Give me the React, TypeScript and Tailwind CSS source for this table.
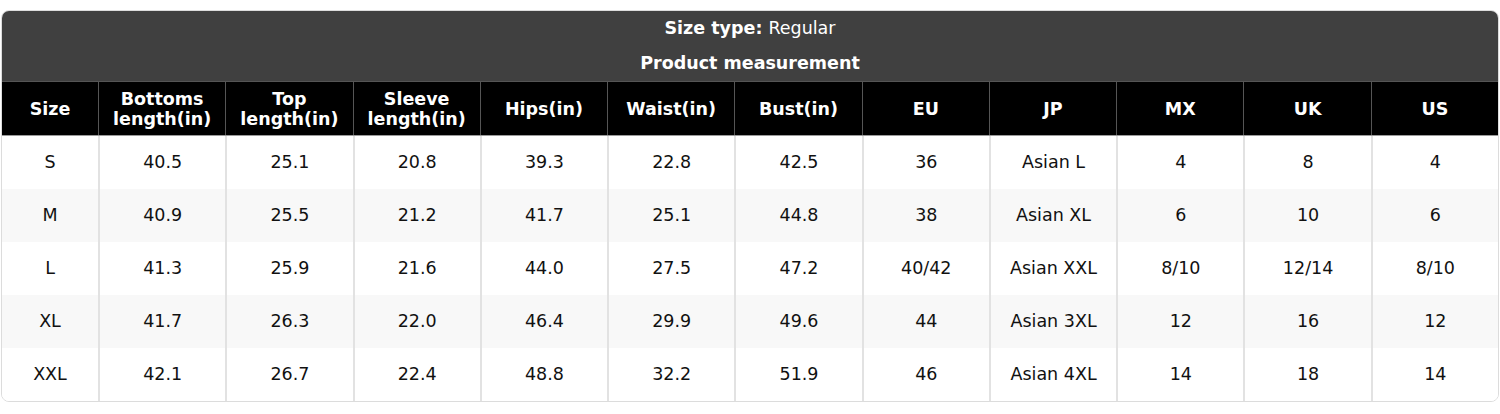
import React from "react";

const headers = [
  ["Size"],
  ["Bottoms", "length(in)"],
  ["Top", "length(in)"],
  ["Sleeve", "length(in)"],
  ["Hips(in)"],
  ["Waist(in)"],
  ["Bust(in)"],
  ["EU"],
  ["JP"],
  ["MX"],
  ["UK"],
  ["US"],
];

const rows = [
  ["S", "40.5", "25.1", "20.8", "39.3", "22.8", "42.5", "36", "Asian L", "4", "8", "4"],
  ["M", "40.9", "25.5", "21.2", "41.7", "25.1", "44.8", "38", "Asian XL", "6", "10", "6"],
  ["L", "41.3", "25.9", "21.6", "44.0", "27.5", "47.2", "40/42", "Asian XXL", "8/10", "12/14", "8/10"],
  ["XL", "41.7", "26.3", "22.0", "46.4", "29.9", "49.6", "44", "Asian 3XL", "12", "16", "12"],
  ["XXL", "42.1", "26.7", "22.4", "48.8", "32.2", "51.9", "46", "Asian 4XL", "14", "18", "14"],
];

export default function App() {
  return (
    <div
      className="w-[1500px] h-[414px] bg-white pt-[10px] px-[1px]"
      style={{ fontFamily: '"DejaVu Sans", Verdana, sans-serif' }}
    >
      <div className="rounded-[8px] border border-[#dcdcdc] overflow-hidden">
        <div className="bg-[#404040] text-white text-[17.5px] border-b border-[#555]">
          <div className="h-[35px] flex items-center justify-center">
            <span className="font-bold">Size type:</span>
            <span className="ml-[6px]">Regular</span>
          </div>
          <div className="h-[35px] flex items-center justify-center font-bold">
            Product measurement
          </div>
        </div>
        <div className="grid grid-cols-[96px_repeat(11,minmax(0,1fr))] bg-black text-white font-bold text-[17.5px] leading-[20px] border-b border-[#9a9a9a]">
          {headers.map((h, i) => (
            <div
              key={i}
              className={`h-[53px] flex flex-col items-center justify-center text-center ${
                i > 0 ? "border-l border-[#555]" : ""
              }`}
            >
              {h.map((l, j) => (
                <span key={j}>{l}</span>
              ))}
            </div>
          ))}
        </div>
        {rows.map((r, ri) => (
          <div
            key={ri}
            className={`grid grid-cols-[96px_repeat(11,minmax(0,1fr))] text-[17.5px] text-[#111] ${
              ri % 2 === 1 ? "bg-[#f8f8f8]" : "bg-white"
            }`}
          >
            {r.map((c, ci) => (
              <div
                key={ci}
                className={`h-[53px] flex items-center justify-center ${
                  ci > 0 ? "border-l-2 border-[#e2e2e2]" : ""
                }`}
              >
                {c}
              </div>
            ))}
          </div>
        ))}
      </div>
    </div>
  );
}
